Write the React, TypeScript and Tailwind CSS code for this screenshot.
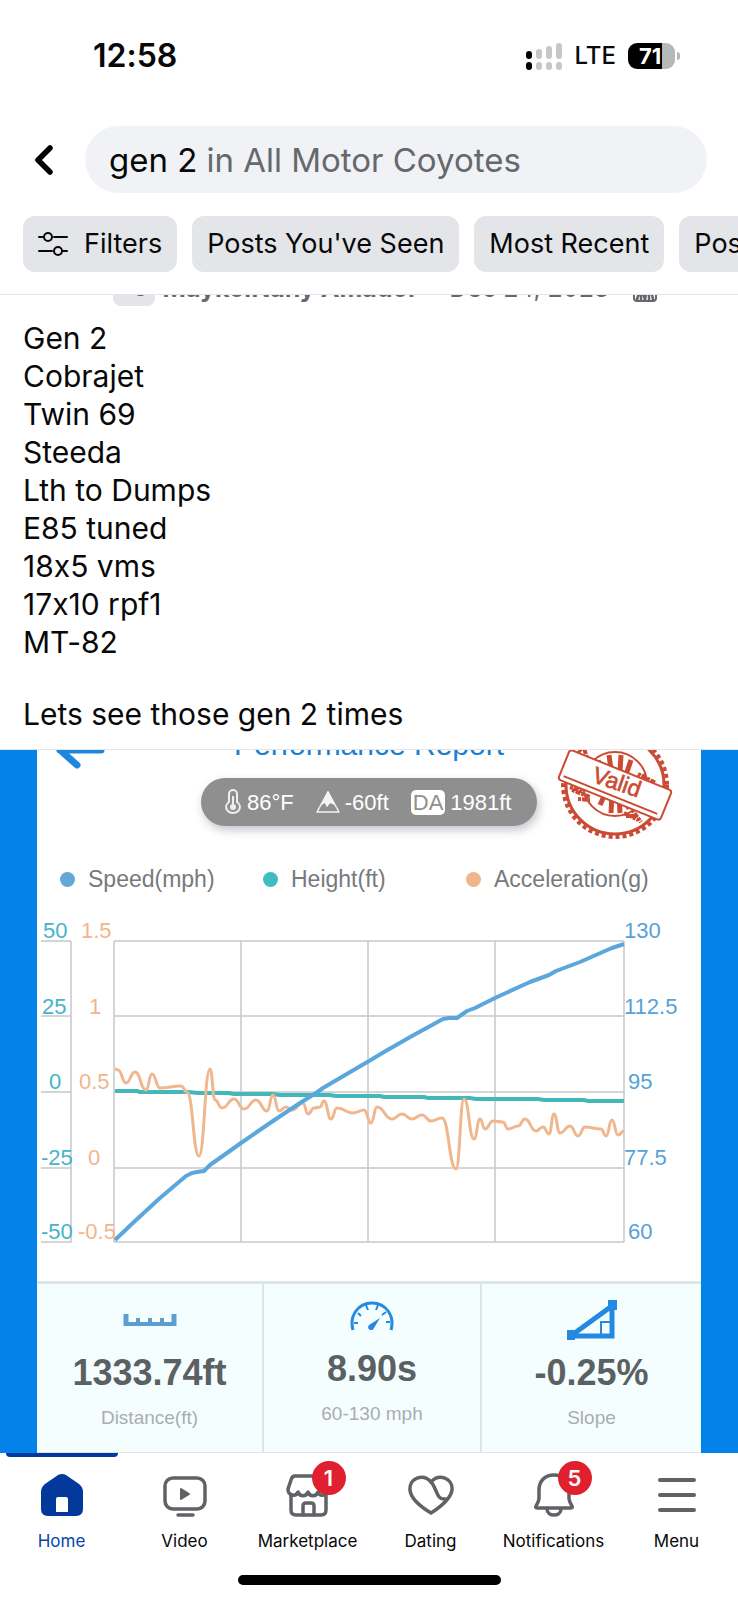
import { useState } from "react";
import type { ReactNode } from "react";

const chips = ["Posts You've Seen", "Most Recent", "Posts From"];

const mods = [
  "Gen 2",
  "Cobrajet",
  "Twin 69",
  "Steeda",
  "Lth to Dumps",
  "E85 tuned",
  "18x5 vms",
  "17x10 rpf1",
  "MT-82",
];

const legend = [
  { label: "Speed(mph)", dot: "bg-[#62a8d9]" },
  { label: "Height(ft)", dot: "bg-[#3fbcbc]" },
  { label: "Acceleration(g)", dot: "bg-[#efb68d]" },
];

type Point = [number, number];

const speed: Point[] = [
  [115, 341], [135, 322], [160, 299], [186, 277], [192, 274], [197, 273], [204, 272], [210, 266],
  [241, 244], [270, 224], [300, 204], [316, 194], [323, 189], [340, 179], [369, 162], [384, 153],
  [412, 137], [443, 120], [449, 119], [457, 119], [467, 112], [475, 109], [495, 99], [530, 83],
  [549, 76], [556, 72], [580, 63], [605, 52], [612, 49], [624, 45],
];

const height: Point[] = [
  [115, 192], [137, 192], [140, 193], [188, 193], [198, 194], [228, 194], [234, 195], [272, 195],
  [280, 196], [330, 196], [336, 197], [380, 197], [384, 198], [424, 198], [428, 199], [470, 199],
  [476, 200], [538, 200], [544, 201], [584, 201], [588, 202], [624, 202],
];

const acceleration: Point[] = [
  [115, 170], [118, 171], [126, 184], [135, 173], [146, 191], [152, 175], [160, 189], [181, 187],
  [187, 193], [199, 257], [210, 170], [215, 201], [222, 209], [234, 200], [244, 210], [256, 201],
  [267, 212], [273, 196], [279, 212], [286, 208], [292, 211], [303, 204], [308, 215], [314, 209],
  [320, 208], [324, 202], [331, 220], [337, 209], [353, 214], [364, 211], [371, 224], [377, 208],
  [392, 220], [402, 215], [412, 220], [422, 216], [431, 222], [442, 219], [456, 270],
  [464, 200], [474, 240], [480, 220], [485, 230], [493, 222], [503, 223], [508, 230], [518, 227],
  [525, 220], [536, 232], [543, 228], [549, 235], [554, 215], [560, 234], [570, 227], [578, 237],
  [585, 228], [601, 230], [606, 237], [612, 221], [618, 236], [624, 232],
];

const heightTicks = [
  { label: "50", x: 43 },
  { label: "25", x: 42 },
  { label: "0", x: 49 },
  { label: "-25", x: 41 },
  { label: "-50", x: 41 },
];

const accelTicks = [
  { label: "1.5", x: 81 },
  { label: "1", x: 89 },
  { label: "0.5", x: 79 },
  { label: "0", x: 88 },
  { label: "-0.5", x: 78 },
];

const speedTicks = [
  { label: "130", x: 624 },
  { label: "112.5", x: 624 },
  { label: "95", x: 628 },
  { label: "77.5", x: 624 },
  { label: "60", x: 628 },
];

const tickLines = [42, 117, 193, 269, 343];
const tickBase = [39, 115, 190, 266, 340];

const line = (pts: Point[]) => pts.map(([x, y], i) => `${i ? "L" : "M"}${x} ${y}`).join(" ");

const smooth = (pts: Point[]) =>
  pts
    .map(([x, y], i) => {
      if (i === 0) return `M${x} ${y}`;
      const [px, py] = pts[i - 1];
      const mx = (px + x) / 2;
      return `C${mx} ${py} ${mx} ${y} ${x} ${y}`;
    })
    .join(" ");

function StatusBar() {
  return (
    <div className="flex h-28 items-center justify-between pl-[93px] pr-[58px]">
      <span className="text-[32px] leading-10 font-semibold">12:58</span>
      <div className="flex items-center gap-3">
        <svg width="38" height="27" viewBox="0 0 38 27" aria-hidden="true">
          <g fill="#000">
            <rect x="1" y="8" width="6" height="8" rx="3" />
            <rect x="1" y="19" width="6" height="8" rx="3" />
          </g>
          <g fill="#c6c7c7">
            <rect x="11" y="6" width="6" height="10" rx="3" />
            <rect x="21" y="3" width="6" height="13" rx="3" />
            <rect x="31" y="0" width="6" height="16" rx="3" />
            <rect x="11" y="19" width="6" height="8" rx="3" />
            <rect x="21" y="19" width="6" height="8" rx="3" />
            <rect x="31" y="19" width="6" height="8" rx="3" />
          </g>
        </svg>
        <span className="text-[24px] leading-8 font-medium">LTE</span>
        <div className="flex items-center gap-[2px]">
          <div className="flex h-[26px] w-[47px] items-center overflow-hidden rounded-[9px] bg-[linear-gradient(to_right,#000_72%,#b5b8b9_72%)] pl-[11px] text-[22px] font-bold text-white">
            71
          </div>
          <div className="h-2 w-[3px] rounded-r-full bg-[#b5b8b9]" />
        </div>
      </div>
    </div>
  );
}

function SearchHeader() {
  const [query, setQuery] = useState("gen 2");
  return (
    <header className="border-b border-[#e3e5e8] bg-white">
      <StatusBar />
      <div className="mt-[14px] flex items-center pr-[31px]">
        <button aria-label="Back" className="flex h-[67px] w-[85px] items-center pl-[33px]">
          <svg width="20" height="32" viewBox="0 0 20 32" fill="none" stroke="#000" strokeWidth="5.5" strokeLinecap="round" strokeLinejoin="round">
            <path d="M17 4 5 16l12 12" />
          </svg>
        </button>
        <label className="flex h-[67px] flex-1 items-center gap-[9px] rounded-full bg-[#f0f2f5] px-6 text-[33px] leading-10">
          <input
            aria-label="Search"
            className="field-sizing-content bg-transparent outline-none"
            value={query}
            onChange={(e) => setQuery(e.target.value)}
          />
          <span className="text-[#65686c]">in All Motor Coyotes</span>
        </label>
      </div>
      <div className="mt-[23px] mb-[22px] flex gap-[15px] overflow-hidden pl-[23px] text-[27px] leading-8 whitespace-nowrap">
        <button className="flex h-14 shrink-0 items-center gap-4 rounded-xl bg-[#e3e5e9] px-[15px]">
          <svg width="30" height="24" viewBox="0 0 30 24" fill="none" stroke="#080809" strokeWidth="2" strokeLinecap="round">
            <path d="M1 5h4M16 5h13M1 19h13M25 19h4" />
            <circle cx="10" cy="5" r="4" />
            <circle cx="20" cy="19" r="4" />
          </svg>
          Filters
        </button>
        {chips.map((chip) => (
          <button key={chip} className="h-14 shrink-0 rounded-xl bg-[#e3e5e9] px-[15px]">
            {chip}
          </button>
        ))}
      </div>
    </header>
  );
}

function PostText() {
  return (
    <section>
      {/* author row is scrolled under the header */}
      <div className="overflow-hidden pl-[113px]">
        <div className="-mt-5 flex h-[31px] items-end text-[25px] leading-[31px] text-[#65686c]">
          <span className="mr-2 rounded-lg bg-[#e3e5e9] px-2 pb-1 text-[20px] leading-[26px]">+8</span>
          <span className="flex h-9 items-center">
            <b className="font-bold">MaykolNany Amador</b>
            <span className="mx-3">·</span>
            <span>Dec 24, 2023</span>
            <span className="mx-2">·</span>
          </span>
          <svg className="mb-1 shrink-0" width="24" height="20" viewBox="0 0 24 20" fill="none" stroke="#65686c" strokeWidth="2">
            <path d="M1 1v15q0 3 3 3h16q3 0 3-3V1" />
            <path d="M4 19q0-6 4-8 4 2 4 8M12 19q0-8 4-8t4 8M8 12v7M16 12v7" strokeWidth="2.5" />
          </svg>
        </div>
      </div>
      <div className="px-[23px] pt-[13px] pb-4 text-[30px] leading-[38px]">
        {mods.map((mod) => (
          <p key={mod}>{mod}</p>
        ))}
        <p className="mt-[34px]">Lets see those gen 2 times</p>
      </div>
    </section>
  );
}

function Stamp() {
  return (
    <svg className="absolute top-0 right-[28px]" width="116" height="116" viewBox="557 728 116 116" fill="none" stroke="#cb4a33">
      <circle cx="615" cy="786" r="52" strokeWidth="4" strokeDasharray="4 3" />
      <circle cx="615" cy="786" r="49" strokeWidth="3" />
      <circle cx="615" cy="785" r="32" strokeWidth="2" />
      <path d="m598 762 6 9m5-15 2 14m10-14-1 17m11-12-5 15M600 806l6-13m5 21 1-20m8 20-1-18m10 14-5-14m14 6-6-9" strokeWidth="5" />
      <path d="m583 763-7-9m11 5-3-10m-10 5 16 8m48 13 18 9m-16-2 18 7m-15-14 4 9M570 788l14 5m-12-2 18 7m-12 2 12 1m34 13 14 7m-6-10 9 12m-15-6 8 0" strokeWidth="4" strokeDasharray="3 1 5 1" />
      <g transform="rotate(22 615 786)">
        <rect x="560" y="770" width="110" height="32" rx="3" fill="#fff" strokeWidth="2" />
        <path d="M564 797h101" strokeWidth="2" />
      </g>
      <text x="617" y="791" transform="rotate(19 617 783)" textAnchor="middle" fontSize="23" fill="#cb4a33" strokeWidth="0.6">
        Valid
      </text>
    </svg>
  );
}

function Chart() {
  return (
    <svg className="block w-full" viewBox="37 0 664 382" fill="none" role="img" aria-label="Speed, height and acceleration">
      <g stroke="#c6c8ca" strokeWidth="1.5">
        {tickLines.map((y) => (
          <path key={y} d={`M41 ${y}h30M114 ${y}h510`} />
        ))}
        <path d="M71 42v302M114 42v301M241 42v301M368 42v301M495 42v301M624 42v301" />
      </g>
      <g fontSize="22">
        {heightTicks.map((t, i) => (
          <text key={t.label} x={t.x} y={tickBase[i]} fill="#45b4c8">{t.label}</text>
        ))}
        {accelTicks.map((t, i) => (
          <text key={t.label} x={t.x} y={tickBase[i]} fill="#f3b48c">{t.label}</text>
        ))}
        {speedTicks.map((t, i) => (
          <text key={t.label} x={t.x} y={tickBase[i]} fill="#55a3d6">{t.label}</text>
        ))}
      </g>
      <path d={line(height)} stroke="#42b8bb" strokeWidth="4" />
      <path d={smooth(acceleration)} stroke="#f0b78f" strokeWidth="3" />
      <path d={line(speed)} stroke="#5ba7dc" strokeWidth="4" strokeLinejoin="round" />
    </svg>
  );
}

function Stat({ icon, value, label, className = "" }: { icon: ReactNode; value: string; label: string; className?: string }) {
  return (
    <div className={`flex flex-col items-center ${className}`}>
      <div className="flex h-10 items-center">{icon}</div>
      <p className="mt-[13px] text-[36px] leading-10 font-bold text-[#5b6063]">{value}</p>
      <p className="mt-[13px] text-[19px] leading-6 text-[#a9adb0]">{label}</p>
    </div>
  );
}

function Report() {
  return (
    <section className="overflow-hidden border-t border-[#e3e5e8] bg-[#0382ea] px-[37px] font-['Liberation_Sans',Arial,sans-serif]">
      <div className="relative bg-white">
        <div className="relative -mt-[23px] flex h-9 justify-center">
          <svg className="absolute top-0 left-4" width="52" height="44" viewBox="0 0 52 44" fill="none" stroke="#1c86e0" strokeWidth="7" strokeLinecap="round" strokeLinejoin="round">
            <path d="M24 8 7 23l17 15M7 23h41" />
          </svg>
          <h2 className="text-[30px] leading-9 text-[#1b7fd0]">Performance Report</h2>
        </div>
        <Stamp />
        <div className="mx-auto mt-[15px] flex h-12 w-[336px] items-center rounded-full bg-[#8f8f8f] pl-[23px] text-[22px] text-white shadow-[2px_4px_10px_rgba(80,90,110,0.35)]">
          <svg width="18" height="26" viewBox="0 0 18 26" fill="none" stroke="#eee" strokeWidth="2">
            <path d="M5 13V5a4 4 0 0 1 8 0v8a7 6 0 1 1-8 0Z" />
            <path d="M9 7v11" />
            <circle cx="9" cy="18" r="2" fill="#eee" />
          </svg>
          <span className="ml-[5px]">86°F</span>
          <svg className="ml-[22px]" width="24" height="24" viewBox="0 0 24 24" fill="none" stroke="#f4f4f4" strokeWidth="1.5" strokeLinejoin="round">
            <path d="M12 2 1 22h22Z" />
            <path d="m12 2-6 12 3-2 2 4 3-4 4 2Z" fill="#f4f4f4" />
          </svg>
          <span className="ml-[5px]">-60ft</span>
          <span className="ml-[22px] rounded-[5px] bg-white px-[2px] leading-[25px] text-[#8f8f8f]">DA</span>
          <span className="ml-[5px]">1981ft</span>
        </div>
        <div className="mt-[38px] grid grid-cols-3 pr-8 pl-[23px] text-[23px] leading-[30px] text-[#77797b]">
          {legend.map((item) => (
            <div key={item.label} className="flex items-center gap-[13px] whitespace-nowrap">
              <span className={`size-[15px] shrink-0 rounded-full ${item.dot}`} />
              {item.label}
            </div>
          ))}
        </div>
        <div className="mt-[5px]">
          <Chart />
        </div>
        <div className="grid grid-cols-[225fr_220fr_219fr] border-y-[3px] border-b border-[#dfe4e6] bg-[#f5feff]">
          <Stat
            className="h-[168px] pt-4"
            value="1333.74ft"
            label="Distance(ft)"
            icon={
              <svg width="54" height="14" viewBox="0 0 54 14" fill="none" stroke="#5a9fd0">
                <path d="M3 1v12M51 1v12" strokeWidth="5" />
                <path d="M1 11h52M15 5v6M27 5v6M39 5v6" strokeWidth="4" />
              </svg>
            }
          />
          <Stat
            className="h-[168px] border-x-2 border-[#dfe4e6] pt-3"
            value="8.90s"
            label="60-130 mph"
            icon={
              <svg width="46" height="32" viewBox="0 0 46 32" fill="none" stroke="#2389e3" strokeWidth="3">
                <path d="M4 30C0 16 9 3 23 3s23 13 19 27" />
                <path d="M5 23h4M9 13l3 3M17 5l2 5M29 5l-2 5M37 12l-4 3M41 22h-4" strokeWidth="2" />
                <path d="m31 18-6 10a3 3 0 1 1-5-3Z" fill="#2389e3" stroke="none" />
              </svg>
            }
          />
          <Stat
            className="h-[168px] pt-4"
            value="-0.25%"
            label="Slope"
            icon={
              <svg width="50" height="40" viewBox="0 0 50 40" fill="none" stroke="#2389e3">
                <path d="M5 35 45 6v30H5" strokeWidth="5" />
                <path d="M34 34V22h10" strokeWidth="2" />
                <path d="M0 30h8v10H0ZM41 0h9v10h-9Z" fill="#2389e3" stroke="none" />
              </svg>
            }
          />
        </div>
      </div>
    </section>
  );
}

const tabs = [
  {
    label: "Home",
    icon: (
      <svg width="44" height="44" viewBox="0 0 44 44">
        <path d="M18 2q4-2 8 0l13 9q4 3 4 8v17q0 7-7 7H8q-7 0-7-7V19q0-5 4-8Z" fill="#03399a" />
        <path d="M16 39V26q0-2 2-2h8q2 0 2 2v13Z" fill="#fff" />
      </svg>
    ),
  },
  {
    label: "Video",
    icon: (
      <svg width="44" height="44" viewBox="0 0 44 44" fill="none" stroke="#606266" strokeWidth="3.5" strokeLinecap="round">
        <rect x="2" y="5" width="40" height="31" rx="8" />
        <path d="M15 42h15" />
        <path d="M18 16v10l8-5Z" fill="#606266" strokeWidth="2" strokeLinejoin="round" />
      </svg>
    ),
  },
  {
    label: "Marketplace",
    badge: 1,
    icon: (
      <svg width="44" height="44" viewBox="0 0 44 44" fill="none" stroke="#606266" strokeWidth="3.5" strokeLinecap="round" strokeLinejoin="round">
        <path d="M9 3h26q3 0 4 4l3 9c0 7-8 8-10 3-2 5-8 5-10 0-2 5-8 5-10 0C10 24 2 23 2 16l3-9q1-4 4-4Z" />
        <path d="M5 22v15q0 5 5 5h25q5 0 5-5V22" />
        <path d="M17 42V33q0-3 3-3h5q3 0 3 3v9" />
      </svg>
    ),
  },
  {
    label: "Dating",
    icon: (
      <svg width="46" height="44" viewBox="0 0 46 44" fill="none" stroke="#606266" strokeWidth="3.5" strokeLinecap="round" strokeLinejoin="round">
        <path d="M23 40Q3 28 2 17C1 5 15 0 23 9 31 0 45 5 44 17 43 28 23 40 23 40Z" />
        <path d="M23 9c6 6 5 18 14 17" />
      </svg>
    ),
  },
  {
    label: "Notifications",
    badge: 5,
    icon: (
      <svg width="44" height="44" viewBox="0 0 44 44" fill="none" stroke="#606266" strokeWidth="3.5" strokeLinecap="round" strokeLinejoin="round">
        <path d="M22 2C12 2 7 9 7 17v8q0 3-3 8-1 2 1 2h34q2 0 1-2-3-5-3-8v-8C37 9 32 2 22 2Z" />
        <path d="M15 36c0 8 14 8 14 0" />
      </svg>
    ),
  },
  {
    label: "Menu",
    icon: (
      <svg width="44" height="44" viewBox="0 0 44 44" fill="none" stroke="#606266" strokeWidth="4" strokeLinecap="round">
        <path d="M5 7h34M5 22h34M5 37h34" />
      </svg>
    ),
  },
];

function TabBar() {
  const [active, setActive] = useState("Home");
  return (
    <nav className="bg-white pb-[15px]">
      <div className="flex">
        {tabs.map((tab) => {
          const on = tab.label === active;
          return (
            <button
              key={tab.label}
              onClick={() => setActive(tab.label)}
              className={`flex flex-1 basis-0 flex-col items-center text-[17px] leading-6 ${on ? "text-[#0646a8]" : "text-[#080809]"}`}
            >
              <span className={`h-1 w-[112px] rounded-b-sm ${on ? "bg-[#03399a]" : ""}`} />
              <span className="relative mt-4">
                {tab.icon}
                {tab.badge && (
                  <span className="absolute -top-3 left-[26px] flex size-[34px] items-center justify-center rounded-full bg-[#e0202f] text-[22px] font-semibold text-white">
                    {tab.badge}
                  </span>
                )}
              </span>
              <span className="mt-3">{tab.label}</span>
            </button>
          );
        })}
      </div>
      <div className="mx-auto mt-[22px] h-[10px] w-[263px] rounded-full bg-black" />
    </nav>
  );
}

export default function App() {
  return (
    <div className="min-h-screen overflow-x-hidden bg-white font-['Inter',sans-serif] text-[#080809] [font-feature-settings:'calt'_0]">
      <SearchHeader />
      <PostText />
      <Report />
      <TabBar />
    </div>
  );
}
